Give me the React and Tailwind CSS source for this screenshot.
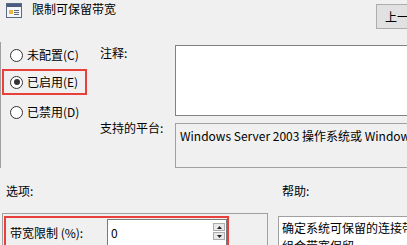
import React from "react";

function Radio({ checked }) {
  return (
    <span className="flex h-[13px] w-[13px] shrink-0 items-center justify-center rounded-full border border-[#333333] bg-white">
      {checked && <span className="h-[6px] w-[6px] rounded-full bg-[#333333]" />}
    </span>
  );
}

function PolicyIcon() {
  return (
    <svg width="16" height="15" viewBox="0 0 16 15">
      <rect x="0.5" y="0.5" width="15" height="14" fill="#f4f6f8" stroke="#5a6a86" />
      <rect x="1" y="1" width="14" height="3" fill="#4b5d7e" />
      <rect x="3" y="7" width="4" height="4" fill="#e8b93a" />
      <rect x="8" y="7" width="5" height="1" fill="#5a6a86" />
      <rect x="8" y="9" width="5" height="1" fill="#5a6a86" />
      <rect x="8" y="11" width="5" height="1" fill="#5a6a86" />
    </svg>
  );
}

export default function App() {
  return (
    <div
      className="h-[245px] w-[407px] overflow-hidden bg-[#f0f0f0] text-[12px] leading-4 text-black"
      style={{ fontFamily: '"Noto Sans CJK SC", "Noto Sans", sans-serif' }}
    >
      {/* header */}
      <div className="flex h-[42px] items-start">
        <div className="flex w-[376px] shrink-0 items-start">
          <div className="ml-[6px] mt-[3px]">
            <PolicyIcon />
          </div>
          <span className="ml-[10px] mt-[1px]">限制可保留带宽</span>
        </div>
        <button className="mt-[4px] h-[25px] w-[100px] shrink-0 whitespace-nowrap border border-[#adadad] bg-[#e1e1e1] pl-[8px] text-left">
          上一个设置(P)
        </button>
      </div>

      {/* settings */}
      <div className="flex border-l border-[#a0a0a0]">
        <div className="w-[99px] shrink-0">
          <div className="flex h-[26px] items-center gap-[4px] pl-[9px]">
            <Radio />
            <span>未配置(C)</span>
          </div>
          <div className="ml-px mt-px flex h-[26px] w-[85px] items-center gap-[4px] border-2 border-[#e8413c] pl-[6px]">
            <Radio checked />
            <span>已启用(E)</span>
          </div>
          <div className="mt-[4px] flex h-[26px] items-center gap-[4px] pl-[9px]">
            <Radio />
            <span>已禁用(D)</span>
          </div>
        </div>

        <div className="shrink-0">
          <div className="mt-[3px] flex">
            <span className="w-[75px] shrink-0">注释:</span>
            <div className="h-[71px] w-[260px] border border-[#828282] bg-white" />
          </div>
          <div className="mt-[4px] flex">
            <span className="w-[75px] shrink-0">支持的平台:</span>
            <div className="mt-[3px] h-[45px] w-[260px] overflow-hidden whitespace-nowrap border border-[#a0a0a0] pl-[4px] pt-[4px]">
              Windows Server 2003 操作系统或 Windows XP Professional
            </div>
          </div>
        </div>
      </div>

      {/* section labels */}
      <div className="mt-[15px] flex">
        <span className="w-[282px] shrink-0 pl-[6px]">选项:</span>
        <span>帮助:</span>
      </div>

      {/* bottom panels */}
      <div className="mt-[14px] flex items-start">
        <div className="ml-[2px] h-[40px] w-[266px] shrink-0 border border-[#a0a0a0]">
          <div className="ml-px mt-[2px] flex h-[32px] w-[225px] items-start border-2 border-[#e8413c]">
            <span className="w-[101px] shrink-0 whitespace-nowrap pl-[4px] pt-[7px]">带宽限制 (%):</span>
            <div className="mt-px flex h-[30px] w-[120px] shrink-0 items-start justify-between border border-[#7a7a7a] bg-white">
              <span className="pl-[3px] pt-[5px]">0</span>
              <div className="mr-px mt-[3px] flex w-[12px] flex-col gap-px">
                <div className="flex h-[8px] items-center justify-center border border-[#acacac] bg-[#e8e8e8]">
                  <svg width="5" height="3" viewBox="0 0 5 3">
                    <path d="M2.5 0 L5 3 L0 3 Z" fill="#222" />
                  </svg>
                </div>
                <div className="flex h-[8px] items-center justify-center border border-[#acacac] bg-[#e8e8e8]">
                  <svg width="5" height="3" viewBox="0 0 5 3">
                    <path d="M0 0 L5 0 L2.5 3 Z" fill="#222" />
                  </svg>
                </div>
              </div>
            </div>
          </div>
        </div>
        <div className="ml-[10px] mt-[3px] h-[40px] w-[200px] shrink-0 whitespace-nowrap border border-[#a0a0a0] bg-white pl-[3px] pt-[2px] leading-[18px]">
          <div>确定系统可保留的连接带宽的百分比。此值限制所有</div>
          <div>组合带宽保留。</div>
        </div>
      </div>
    </div>
  );
}
